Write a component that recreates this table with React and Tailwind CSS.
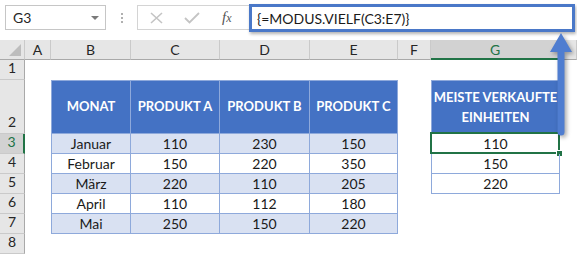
const sales = [
  ['Januar', 110, 230, 150],
  ['Februar', 150, 220, 350],
  ['März', 220, 110, 205],
  ['April', 110, 112, 180],
  ['Mai', 250, 150, 220],
];
const topSold = [110, 150, 220];
const cols = ['A', 'B', 'C', 'D', 'E', 'F', 'G', ''];

const colHead = 'h-5 bg-[#e6e6e6] border-r border-b border-r-[#cacaca] border-b-[#a9a9a9] flex items-center justify-center text-[14px] text-[#262626]';
const rowHead = 'bg-[#e6e6e6] border-r border-b border-r-[#a9a9a9] border-b-[#cacaca] flex items-end justify-center pb-[1px] text-[14px] text-[#262626]';
const headCell = 'bg-[#4472c4] border-r border-b border-[#8ea9db] flex items-center justify-center text-white font-bold text-[13px]';
const dataCell = 'border-r border-b border-[#8ea9db] flex items-center justify-center text-[14px] text-[#1a1a1a]';

function RowHeader({ n, active }) {
  if (active) {
    return (
      <div className="bg-[#d2d2d2] border-r-2 border-b border-r-[#217346] border-b-[#cacaca] flex items-end justify-center pb-[1px] text-[14px] text-[#217346]">
        {n}
      </div>
    );
  }
  return <div className={rowHead}>{n}</div>;
}

export default function App() {
  return (
    <div className="relative w-[577px] h-[254px] overflow-hidden bg-white font-['Lato',sans-serif]">
      {/* formula bar */}
      <div className="h-10 flex items-start">
        <div className="mt-[5px] ml-[5px] w-[101px] h-[25px] border border-[#c6c6c6] flex items-center justify-between pl-[7px] pr-[6px] text-[14px] text-[#262626]">
          <span>G3</span>
          <span className="w-0 h-0 border-l-[4px] border-r-[4px] border-t-[4px] border-l-transparent border-r-transparent border-t-[#7a7a7a]" />
        </div>
        <div className="ml-[15px] mt-[13px] flex flex-col gap-[2px]">
          <span className="w-[2px] h-[2px] bg-[#b0b0b0]" />
          <span className="w-[2px] h-[2px] bg-[#b0b0b0]" />
          <span className="w-[2px] h-[2px] bg-[#b0b0b0]" />
        </div>
        <div className="ml-[14px] mt-[5px] w-[114px] h-[25px] border border-[#d4d4d4] flex items-center">
          <svg className="ml-[12px]" width="13" height="12" viewBox="0 0 13 12">
            <path d="M1 1L12 11M12 1L1 11" stroke="#c4c4c4" strokeWidth="1.6" />
          </svg>
          <svg className="ml-[21px]" width="16" height="12" viewBox="0 0 16 12">
            <path d="M1 6L5.5 10.5L15 1" stroke="#c4c4c4" strokeWidth="1.8" fill="none" />
          </svg>
          <span className="ml-[22px] text-[15px] italic font-['Liberation_Serif',serif] text-[#555]">
            f<span className="text-[12px]">x</span>
          </span>
        </div>
        <div className="-ml-[2px] mt-[4px] w-[326px] h-[28px] border-[3px] border-[#4a78c8] bg-white shadow-[1px_2px_3px_rgba(0,0,0,0.3)] flex items-center pl-[5px] text-[14px] text-[#1a1a1a]">
          {'{=MODUS.VIELF(C3:E7)}'}
        </div>
      </div>

      {/* sheet */}
      <div className="grid grid-cols-[25px_26px_80px_89px_90px_88px_33px_129px_1fr] grid-rows-[20px_20px_54px_repeat(6,20px)]">
        <div className="h-5 bg-[#e6e6e6] border-r border-b border-r-[#cacaca] border-b-[#a9a9a9] flex items-end justify-end pr-[3px] pb-[3px]">
          <svg width="12" height="12" viewBox="0 0 12 12">
            <path d="M12 0V12H0Z" fill="#bdbdbd" />
          </svg>
        </div>
        {cols.map((c) =>
          c === 'G' ? (
            <div key={c} className="h-5 bg-[#d2d2d2] border-r border-b-2 border-r-[#cacaca] border-b-[#217346] flex items-center justify-center text-[14px] text-[#217346]">
              G
            </div>
          ) : (
            <div key={c || 'H'} className={colHead}>{c}</div>
          )
        )}

        {/* row 1 */}
        <RowHeader n={1} />
        <div className="col-span-8" />

        {/* row 2: headers */}
        <RowHeader n={2} />
        <div />
        <div className={headCell + ' border-l border-t'}>MONAT</div>
        <div className={headCell + ' border-t'}>PRODUKT A</div>
        <div className={headCell + ' border-t'}>PRODUKT B</div>
        <div className={headCell + ' border-t'}>PRODUKT C</div>
        <div />
        <div className={headCell + ' border-l border-t flex-col leading-[20px] text-center'}>
          <span>MEISTE VERKAUFTE</span>
          <span>EINHEITEN</span>
        </div>
        <div />

        {sales.map((r, i) => {
          const band = i % 2 === 0 ? ' bg-[#d9e1f2]' : ' bg-white';
          return [
            <RowHeader key={'h' + i} n={i + 3} active={i === 0} />,
            <div key={'a' + i} />,
            <div key={'b' + i} className={dataCell + band + ' border-l'}>{r[0]}</div>,
            <div key={'c' + i} className={dataCell + band}>{r[1]}</div>,
            <div key={'d' + i} className={dataCell + band}>{r[2]}</div>,
            <div key={'e' + i} className={dataCell + band}>{r[3]}</div>,
            <div key={'f' + i} />,
            i < 3 ? (
              <div key={'g' + i} className={dataCell + ' border-l relative'}>
                {topSold[i]}
                {i === 0 && (
                  <>
                    <span className="absolute -top-[2px] -left-[2px] -right-[1px] -bottom-[1px] border-2 border-[#217346]" />
                    <span className="absolute -right-[4px] -bottom-[4px] w-[7px] h-[7px] bg-[#217346] border border-white" />
                  </>
                )}
              </div>
            ) : (
              <div key={'g' + i} />
            ),
            <div key={'x' + i} />,
          ];
        })}

        {/* row 8 */}
        <RowHeader n={8} />
        <div className="col-span-8" />
      </div>

      {/* callout arrow */}
      <svg
        className="absolute left-[545px] top-[30px] drop-shadow-[2px_2px_2px_rgba(0,0,0,0.35)]"
        width="32"
        height="110"
        viewBox="0 0 32 110"
      >
        <path d="M16 3L27 22H19.5V102A3.5 3.5 0 0 1 12.5 102V22H5Z" fill="#4f7dd0" />
      </svg>
    </div>
  );
}
